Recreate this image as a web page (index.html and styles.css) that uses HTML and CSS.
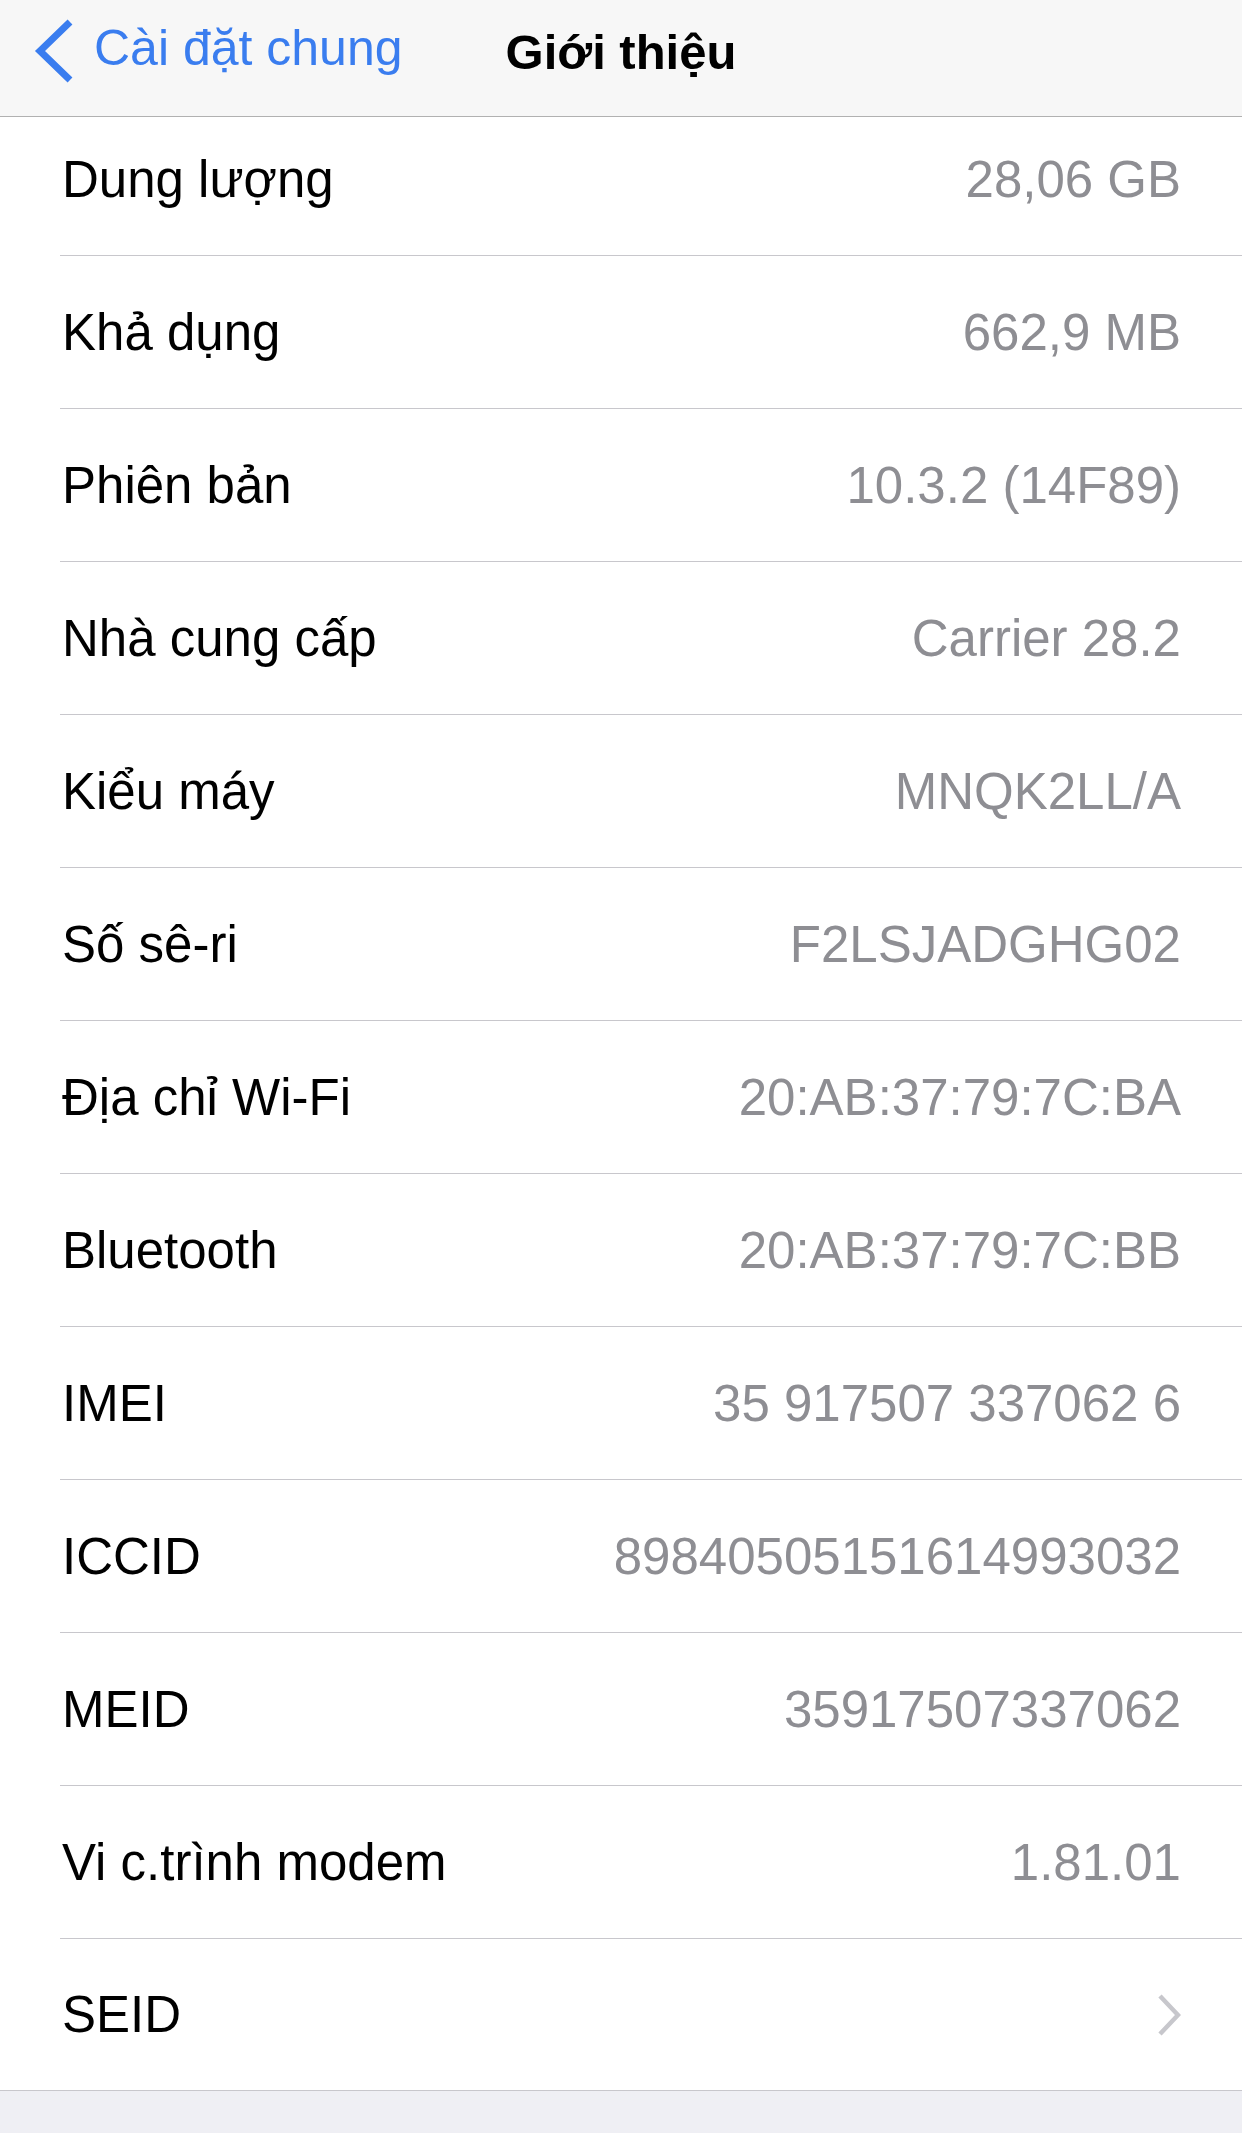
FILE: index.html
```html
<!DOCTYPE html>
<html lang="vi">
<head>
  <meta charset="UTF-8" />
  <meta name="viewport" content="width=device-width, initial-scale=1.0"/>
  <title>Giới thiệu</title>
  <link rel="stylesheet" href="styles.css">
</head>
<body>
  <header class="navbar">
    <a class="back" href="#">
      <svg class="back-icon" width="40" height="64" viewBox="0 0 40 64">
        <polyline points="36,3 6,32 36,61" fill="none" stroke="#3a7def" stroke-width="7" stroke-linecap="butt" stroke-linejoin="miter"/>
      </svg>
      <span>Cài đặt chung</span>
    </a>
    <h1 class="title">Giới thiệu</h1>
  </header>

  <ul class="list">
    <li class="row"><span class="label">Dung lượng</span><span class="value">28,06 GB</span></li>
    <li class="row"><span class="label">Khả dụng</span><span class="value">662,9 MB</span></li>
    <li class="row"><span class="label">Phiên bản</span><span class="value">10.3.2 (14F89)</span></li>
    <li class="row"><span class="label">Nhà cung cấp</span><span class="value">Carrier 28.2</span></li>
    <li class="row"><span class="label">Kiểu máy</span><span class="value">MNQK2LL/A</span></li>
    <li class="row"><span class="label">Số sê-ri</span><span class="value">F2LSJADGHG02</span></li>
    <li class="row"><span class="label">Địa chỉ Wi-Fi</span><span class="value">20:AB:37:79:7C:BA</span></li>
    <li class="row"><span class="label">Bluetooth</span><span class="value">20:AB:37:79:7C:BB</span></li>
    <li class="row"><span class="label">IMEI</span><span class="value">35 917507 337062 6</span></li>
    <li class="row"><span class="label">ICCID</span><span class="value">89840505151614993032</span></li>
    <li class="row"><span class="label">MEID</span><span class="value">35917507337062</span></li>
    <li class="row"><span class="label">Vi c.trình modem</span><span class="value">1.81.01</span></li>
    <li class="row last">
      <span class="label">SEID</span>
      <svg class="chevron" width="24" height="42" viewBox="0 0 24 42">
        <polyline points="3,2 21,21 3,40" fill="none" stroke="#c7c7cc" stroke-width="4.5" stroke-linecap="butt" stroke-linejoin="miter"/>
      </svg>
    </li>
  </ul>
</body>
</html>
```

FILE: styles.css
```css
body {
  margin: 0;
  background-color: #efeff4;
  font-family: "Liberation Sans", Arial, sans-serif;
  color: #000;
}

.navbar {
  position: fixed;
  top: 0;
  left: 0;
  right: 0;
  height: 116px;
  background-color: rgba(247, 247, 247, 0.97);
  border-bottom: 1px solid #b1b1b1;
  z-index: 10;
}

.back {
  position: absolute;
  left: 34px;
  top: 19px;
  display: flex;
  align-items: center;
  gap: 20px;
  color: #3a7def;
  text-decoration: none;
  font-size: 50px;
}

.back span {
  margin-top: -6px;
}

.title {
  margin: 0;
  text-align: center;
  font-size: 49px;
  font-weight: bold;
  line-height: 104px;
}

.list {
  list-style: none;
  margin: 0;
  padding: 103px 0 0;
  background-color: #fff;
  border-bottom: 1px solid #c8c7cc;
}

.row {
  height: 152px;
  margin-left: 60px;
  padding-right: 61px;
  display: flex;
  align-items: center;
  justify-content: space-between;
  border-bottom: 1px solid #c8c7cc;
  font-size: 51px;
}

.row.last {
  border-bottom: none;
  height: 151px;
}

.label {
  padding-left: 2px;
}

.value {
  color: #8e8e93;
}

.chevron {
  display: block;
}
```
